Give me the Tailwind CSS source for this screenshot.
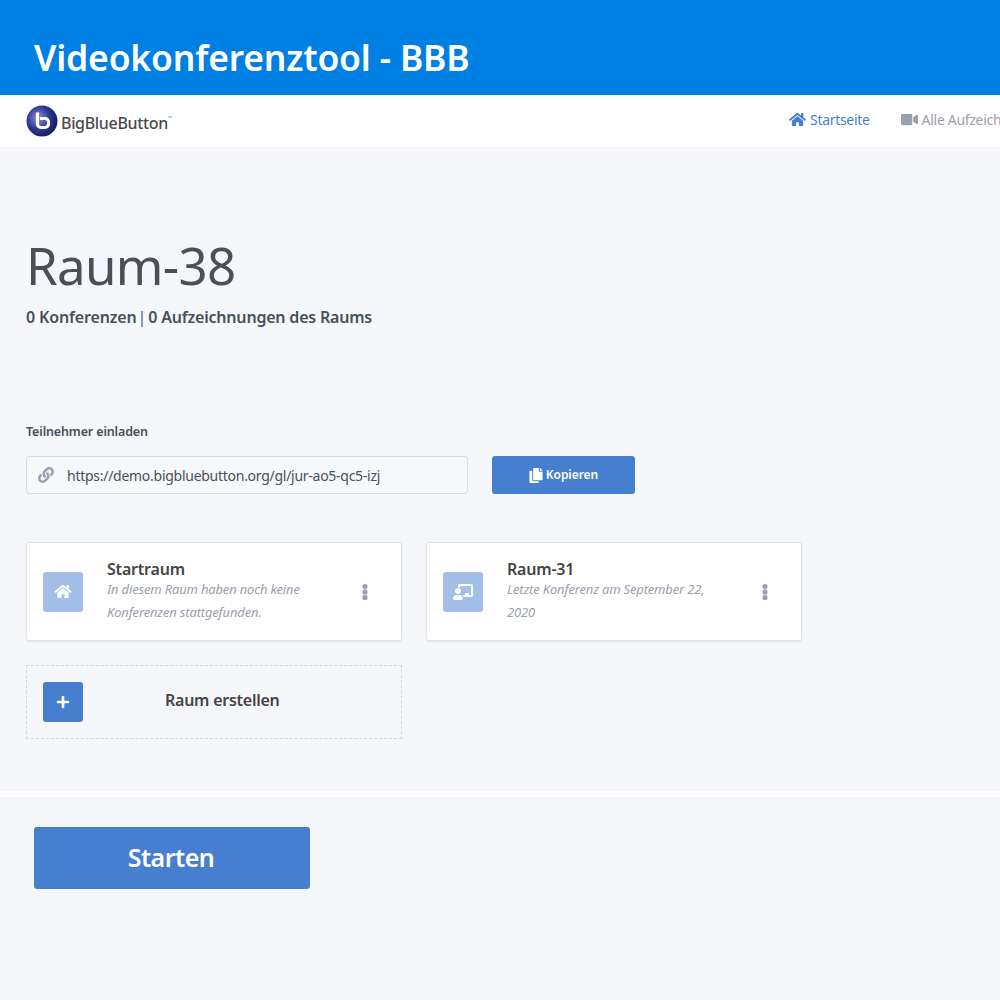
<!DOCTYPE html>
<html lang="de"><head><meta charset="utf-8"><title>BBB</title>
<script src="https://cdn.jsdelivr.net/npm/@tailwindcss/browser@4"></script></head>
<body class="h-[1000px] w-[1000px] overflow-hidden bg-[#f5f7fb] font-['Noto_Sans',sans-serif] text-[#495057]">
<header class="flex h-[95px] items-center bg-[#0080e3] pl-[34px] pt-[20px]">
<h1 class="text-[35.5px] font-semibold leading-none tracking-[-0.2px] text-white">Videokonferenztool - BBB</h1></header>
<nav class="flex h-[52px] items-center justify-between overflow-hidden bg-white pl-[26px]">
<div class="flex items-center gap-[3px]">
<svg class="shrink-0" width="32" height="32" viewBox="0 0 32 32"><defs><radialGradient id="g" cx="0.38" cy="0.4" r="0.65"><stop offset="0" stop-color="#8f96d8"/><stop offset="0.55" stop-color="#2f3a96"/><stop offset="1" stop-color="#141a5e"/></radialGradient></defs><circle cx="16" cy="16" r="15.5" fill="url(#g)"/><path d="M11.5 7.5V19a3.5 3.5 0 0 0 3.5 3.5h4a3.5 3.5 0 0 0 3.5-3.5v-2a3.5 3.5 0 0 0-3.5-3.5h-5" fill="none" stroke="#fff" stroke-width="3.2"/></svg>
<span class="pt-[3px] text-[16px] font-medium tracking-[-0.33px] text-[#4a4a4c]">BigBlueButton</span><span class="mb-[4px] -ml-[3px] text-[5px] text-[#777]">™</span></div>
<div class="flex w-[211px] shrink-0 items-center overflow-hidden whitespace-nowrap pb-[4px] text-[14px] tracking-[-0.3px]">
<svg class="mr-[4px] h-[15px] w-[17px] shrink-0 fill-[#467fcf]" viewBox="0 0 576 512"><path d="M280.37 148.26L96 300.11V464a16 16 0 0 0 16 16l112.06-.29a16 16 0 0 0 15.92-16V368a16 16 0 0 1 16-16h64a16 16 0 0 1 16 16v95.64a16 16 0 0 0 16 16.05L464 480a16 16 0 0 0 16-16V300L295.67 148.26a12.19 12.19 0 0 0-15.3 0zM571.6 251.47L488 182.56V44.05a12 12 0 0 0-12-12h-56a12 12 0 0 0-12 12v72.61L318.47 43a48 48 0 0 0-61 0L4.34 251.47a12 12 0 0 0-1.6 16.9l25.5 31A12 12 0 0 0 45.15 301l235.22-193.74a12.19 12.19 0 0 1 15.3 0L530.9 301a12 12 0 0 0 16.9-1.6l25.5-31a12 12 0 0 0-1.7-16.93z"/></svg>
<span class="text-[#467fcf]">Startseite</span>
<svg class="ml-[31px] mr-[4px] h-[15px] w-[17px] shrink-0 fill-[#9aa0ac]" viewBox="0 0 576 512"><path d="M336.2 64H47.8C21.4 64 0 85.4 0 111.8v288.4C0 426.6 21.4 448 47.8 448h288.4c26.4 0 47.8-21.4 47.8-47.8V111.8c0-26.4-21.4-47.8-47.8-47.8zm189.4 37.7L416 177.3v157.4l109.6 75.5c21.2 14.6 50.4-.3 50.4-25.8V127.5c0-25.4-29.1-40.4-50.4-25.8z"/></svg>
<span class="tracking-[-0.3px] text-[#9aa0ac]">Alle Aufzeichnungen</span></div>
</nav>
<main class="h-[644px] px-[26px]">
<h2 class="pt-[85px] text-[51px] font-normal leading-[66px] tracking-[-0.7px]">Raum-38</h2>
<p class="mt-[7px] text-[16px] font-semibold leading-[24px] tracking-[-0.15px]">0 Konferenzen<span class="ml-[1px] mr-[2px] font-normal text-[#3f5f8a]">|</span><span class="tracking-[-0.2px]">0 Aufzeichnungen des Raums</span></p>
<p class="mt-[93px] text-[12.5px] font-semibold leading-[20px] tracking-[-0.15px]">Teilnehmer einladen</p>
<div class="mt-[14px] flex items-center gap-[24px]">
<div class="flex h-[38px] w-[442px] items-center rounded-[3px] border border-[#d9dfe9] bg-[#f7f8fb] pl-[11px] text-[14px] tracking-[-0.27px]">
<svg class="mr-[13px] h-[16px] w-[16px] shrink-0 fill-[#9aa0ac]" viewBox="0 0 512 512"><path d="M326.612 185.391c59.747 59.809 58.927 155.698.36 214.59-.11.12-.24.25-.36.37l-67.2 67.2c-59.27 59.27-155.699 59.262-214.96 0-59.27-59.26-59.27-155.7 0-214.96l37.106-37.106c9.84-9.84 26.786-3.3 27.294 10.606.648 17.722 3.826 35.527 9.69 52.721 1.986 5.822.567 12.262-3.783 16.612l-13.087 13.087c-28.026 28.026-28.905 73.66-1.155 101.96 28.024 28.579 74.086 28.749 102.325.51l67.2-67.19c28.191-28.191 28.073-73.757 0-101.83-3.701-3.694-7.429-6.564-10.341-8.569a16.037 16.037 0 0 1-6.947-12.606c-.396-10.567 3.348-21.456 11.698-29.806l21.054-21.055c5.521-5.521 14.182-6.199 20.584-1.731a152.482 152.482 0 0 1 20.522 17.197zM467.547 44.449c-59.261-59.262-155.69-59.27-214.96 0l-67.2 67.2c-.12.12-.25.25-.36.37-58.566 58.892-59.387 154.781.36 214.59a152.454 152.454 0 0 0 20.521 17.196c6.402 4.468 15.064 3.789 20.584-1.731l21.054-21.055c8.35-8.35 12.094-19.239 11.698-29.806a16.037 16.037 0 0 0-6.947-12.606c-2.912-2.005-6.64-4.875-10.341-8.569-28.073-28.073-28.191-73.639 0-101.83l67.2-67.19c28.239-28.239 74.3-28.069 102.325.51 27.75 28.3 26.872 73.934-1.155 101.96l-13.087 13.087c-4.35 4.35-5.769 10.79-3.783 16.612 5.864 17.194 9.042 34.999 9.69 52.721.509 13.906 17.454 20.446 27.294 10.606l37.106-37.106c59.271-59.259 59.271-155.699.001-214.959z"/></svg>
https://demo.bigbluebutton.org/gl/jur-ao5-qc5-izj</div>
<button class="flex h-[38px] w-[143px] items-center justify-center gap-[3px] rounded-[3px] bg-[#467fcf] text-[12px] font-semibold tracking-[-0.05px] text-white">
<svg class="h-[15px] w-[14px] shrink-0 fill-white" viewBox="0 0 448 512"><path d="M320 448v40c0 13.255-10.745 24-24 24H24c-13.255 0-24-10.745-24-24V120c0-13.255 10.745-24 24-24h72v296c0 30.879 25.121 56 56 56h168zm0-344V0H152c-13.255 0-24 10.745-24 24v368c0 13.255 10.745 24 24 24h272c13.255 0 24-10.745 24-24V128H344c-13.2 0-24-10.8-24-24zm120.971-31.029L375.029 7.029A24 24 0 0 0 358.059 0H352v96h96v-6.059a24 24 0 0 0-7.029-16.97z"/></svg>Kopieren</button>
</div>
<div class="mt-[48px] flex gap-[24px]">
<article class="flex h-[99px] w-[376px] items-center rounded-[3px] border border-[#e0e3ea] bg-white pl-[16px] shadow-[0_1px_2px_rgba(0,0,0,0.08)]">
<div class="flex h-[40px] w-[40px] shrink-0 items-center justify-center rounded-[3px] bg-[#a3bfe8]">
<svg class="h-[15px] w-[18px] fill-white" viewBox="0 0 576 512"><path d="M280.37 148.26L96 300.11V464a16 16 0 0 0 16 16l112.06-.29a16 16 0 0 0 15.92-16V368a16 16 0 0 1 16-16h64a16 16 0 0 1 16 16v95.64a16 16 0 0 0 16 16.05L464 480a16 16 0 0 0 16-16V300L295.67 148.26a12.19 12.19 0 0 0-15.3 0zM571.6 251.47L488 182.56V44.05a12 12 0 0 0-12-12h-56a12 12 0 0 0-12 12v72.61L318.47 43a48 48 0 0 0-61 0L4.34 251.47a12 12 0 0 0-1.6 16.9l25.5 31A12 12 0 0 0 45.15 301l235.22-193.74a12.19 12.19 0 0 1 15.3 0L530.9 301a12 12 0 0 0 16.9-1.6l25.5-31a12 12 0 0 0-1.7-16.93z"/></svg></div>
<div class="ml-[24px] w-[210px] shrink-0">
<h3 class="mt-[1px] -mb-[1px] text-[16px] font-semibold leading-[19px] tracking-[-0.2px] text-[#444]">Startraum</h3>
<p class="text-[13px] italic leading-[23px] tracking-[-0.17px] text-[#9aa0ac]">In diesem Raum haben noch keine Konferenzen stattgefunden.</p></div>
<svg class="ml-[45px] h-[16px] w-[6px] shrink-0 fill-[#9aa0ac]" viewBox="0 0 6 16"><circle cx="3" cy="2.6" r="2.6"/><circle cx="3" cy="8" r="2.6"/><circle cx="3" cy="13.4" r="2.6"/></svg>
</article>
<article class="flex h-[99px] w-[376px] items-center rounded-[3px] border border-[#e0e3ea] bg-white pl-[16px] shadow-[0_1px_2px_rgba(0,0,0,0.08)]">
<div class="flex h-[40px] w-[40px] shrink-0 items-center justify-center rounded-[3px] bg-[#a3bfe8]">
<svg class="h-[16px] w-[20px] fill-white" viewBox="0 0 640 512"><path d="M208 352c-2.39 0-4.78.35-7.06 1.09C187.98 357.3 174.35 360 160 360c-14.35 0-27.98-2.7-40.95-6.91-2.28-.74-4.66-1.09-7.05-1.09C49.94 352-.33 402.48 0 464.62.14 490.88 21.73 512 48 512h224c26.27 0 47.86-21.12 48-47.38.33-62.14-49.94-112.62-112-112.62zm-48-32c53.02 0 96-42.98 96-96s-42.98-96-96-96-96 42.98-96 96 42.98 96 96 96zM592 0H208c-26.47 0-48 22.25-48 49.59V96c23.42 0 45.1 6.78 64 17.8V64h352v288h-64v-64H384v64h-76.24c19.1 16.69 33.12 38.73 39.69 64H592c26.47 0 48-22.25 48-49.59V49.59C640 22.25 618.47 0 592 0z"/></svg></div>
<div class="ml-[24px] w-[210px] shrink-0">
<h3 class="mt-[1px] -mb-[1px] text-[16px] font-semibold leading-[19px] tracking-[-0.2px] text-[#444]">Raum-31</h3>
<p class="text-[13px] italic leading-[23px] tracking-[-0.17px] text-[#9aa0ac]">Letzte Konferenz am September 22, 2020</p></div>
<svg class="ml-[45px] h-[16px] w-[6px] shrink-0 fill-[#9aa0ac]" viewBox="0 0 6 16"><circle cx="3" cy="2.6" r="2.6"/><circle cx="3" cy="8" r="2.6"/><circle cx="3" cy="13.4" r="2.6"/></svg>
</article>
</div>
<div class="mt-[24px] flex h-[74px] w-[376px] items-center border border-dashed border-[#d5d7dc] pl-[16px]">
<div class="flex h-[40px] w-[40px] items-center justify-center rounded-[3px] bg-[#467fcf]">
<svg class="h-[14px] w-[14px] fill-white" viewBox="0 0 448 512"><path d="M416 208H272V64c0-17.67-14.33-32-32-32h-32c-17.67 0-32 14.33-32 32v144H32c-17.67 0-32 14.33-32 32v32c0 17.67 14.33 32 32 32h144v144c0 17.67 14.33 32 32 32h32c17.67 0 32-14.33 32-32V304h144c17.67 0 32-14.33 32-32v-32c0-17.67-14.33-32-32-32z"/></svg></div>
<span class="ml-[82px] pb-[4px] text-[16px] font-semibold tracking-[-0.25px] text-[#444]">Raum erstellen</span></div>
</main>
<div class="h-[6px] bg-white"></div>
<div class="pl-[34px] pt-[30px]">
<button class="flex h-[62px] w-[276px] items-center justify-center rounded-[3px] bg-[#467fcf] pr-[2px] text-[25px] font-semibold tracking-[-0.5px] text-white">Starten</button></div>
</body></html>
